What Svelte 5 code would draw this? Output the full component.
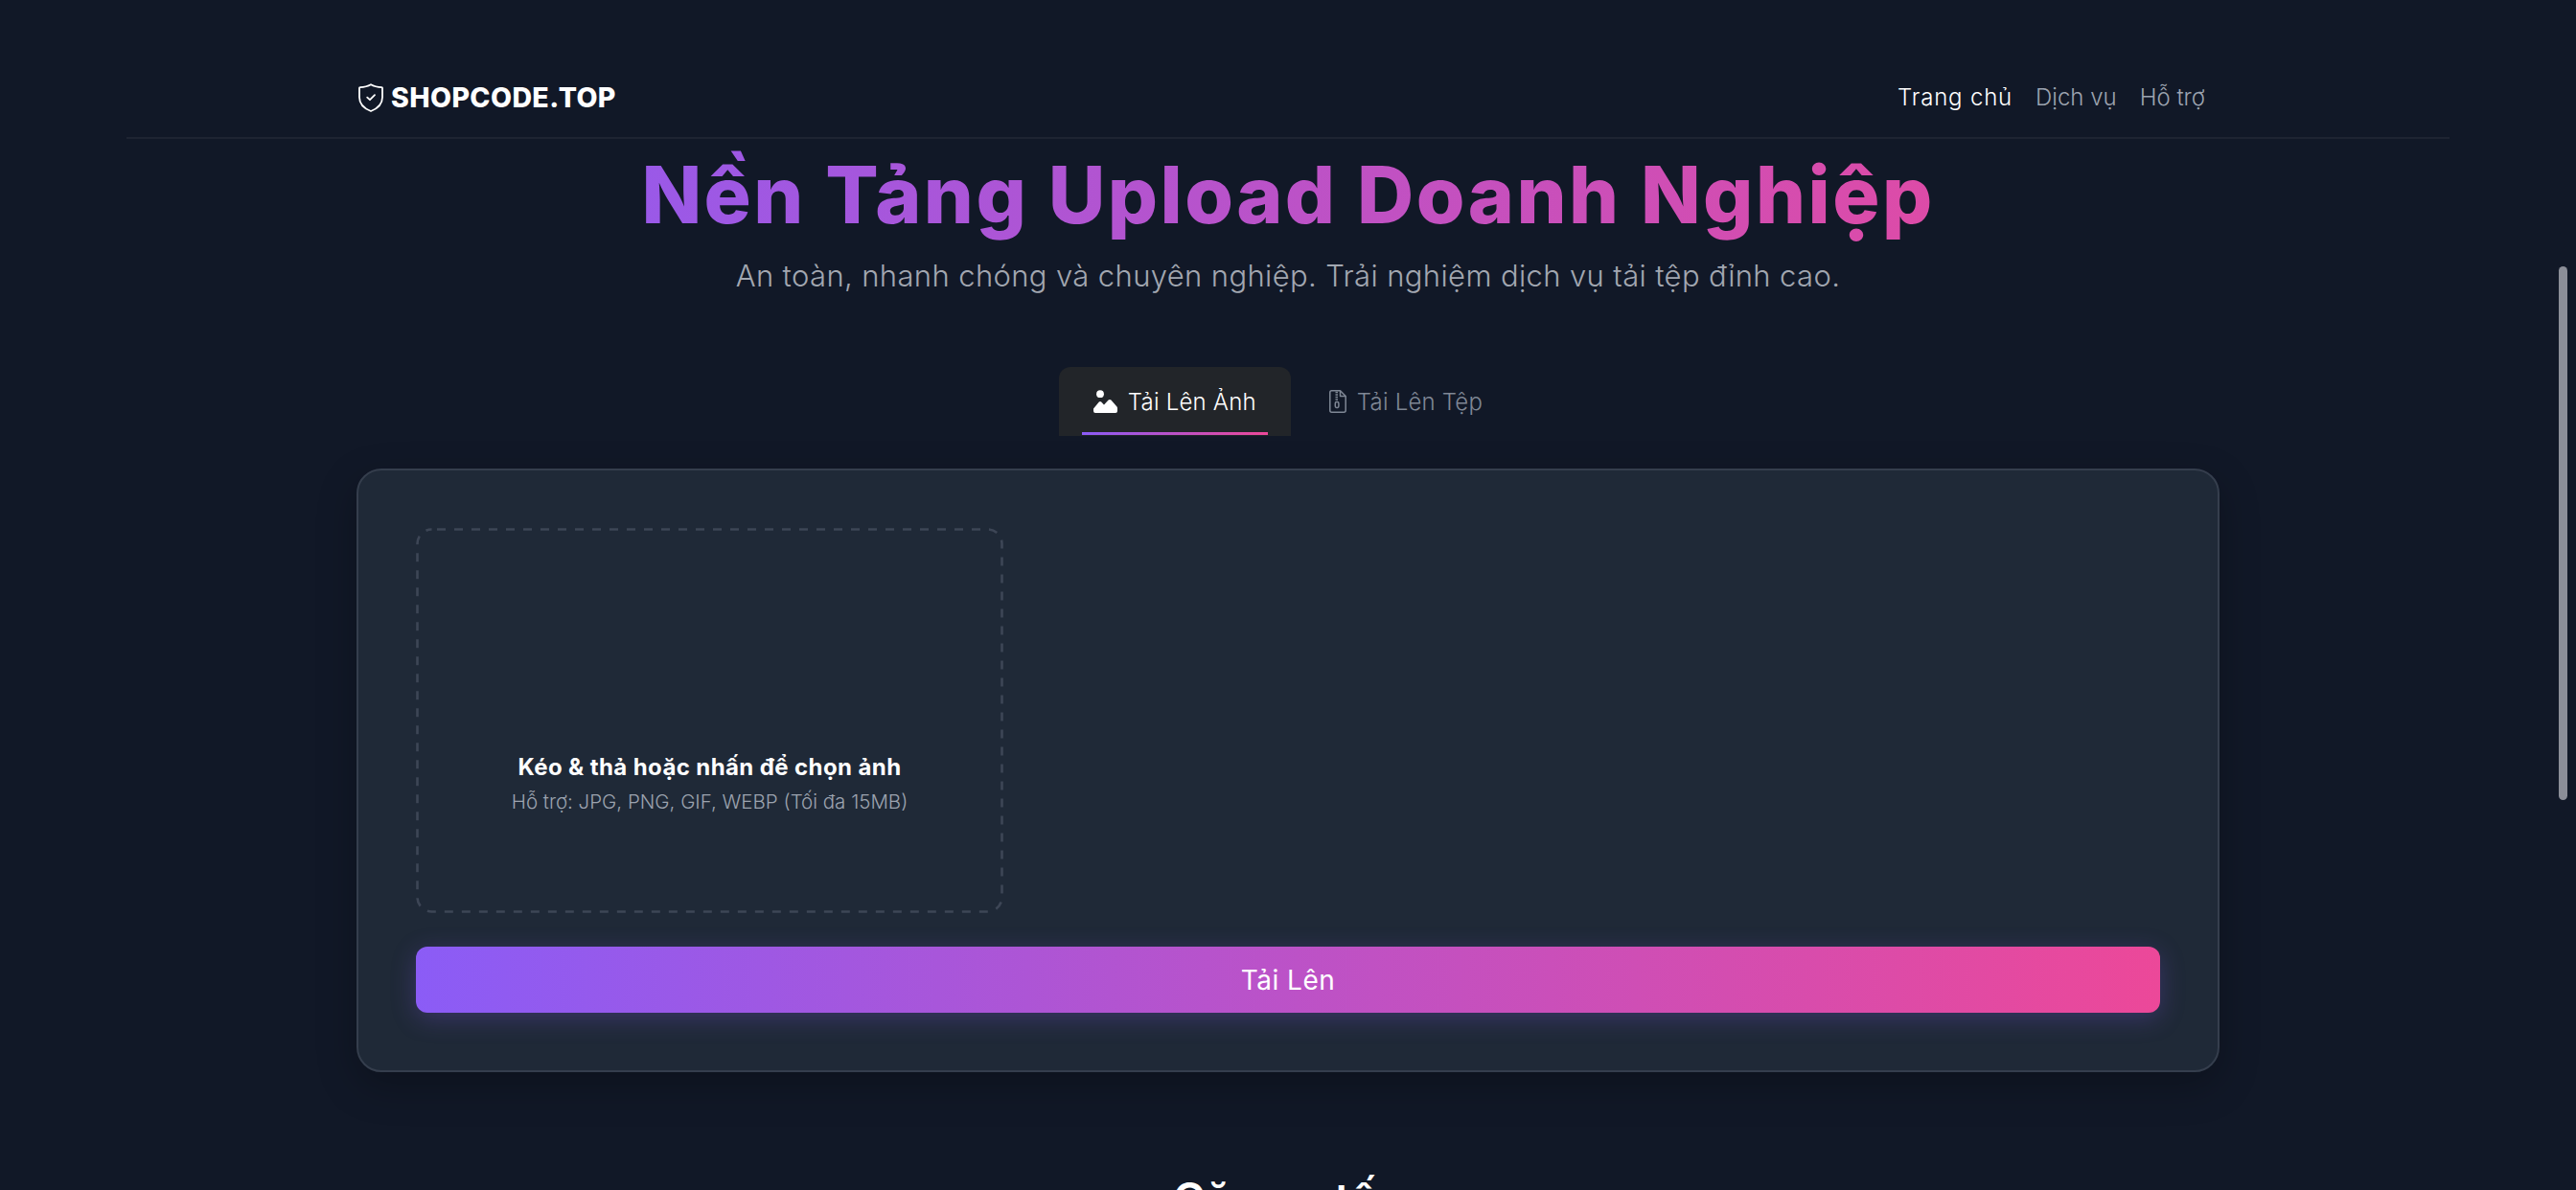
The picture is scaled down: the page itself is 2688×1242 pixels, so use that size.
<script lang="ts">
let tab = $state("image")
const links = ["Trang chủ", "Dịch vụ", "Hỗ trợ"]
</script>

<div class="page">
  <header class="topbar">
    <a class="logo" href="#top">
      <svg class="shield" viewBox="0 0 26 30" fill="none" stroke="currentColor" stroke-width="1.8" stroke-linecap="round" stroke-linejoin="round">
        <path d="M13 1.2C16 3 19.6 3.9 24.4 4.1 24.8 4.1 25 4.4 25 4.8V14.5C25 21 20.6 26 13 29 5.4 26 1 21 1 14.5V4.8C1 4.4 1.2 4.1 1.6 4.1 6.4 3.9 10 3 13 1.2Z" />
        <path d="M9.2 14.6 12 17.2 17 12.2" />
      </svg>
      <span>SHOPCODE.TOP</span>
    </a>
    <nav class="nav">
      {#each links as link, i}
        <a href="#top" class:current={i === 0}>{link}</a>
      {/each}
    </nav>
  </header>

  <main class="content">
    <h1>Nền Tảng Upload Doanh Nghiệp</h1>
    <p class="lede">An toàn, nhanh chóng và chuyên nghiệp. Trải nghiệm dịch vụ tải tệp đỉnh cao.</p>

    <div class="tabs" role="tablist">
      <button class:active={tab === "image"} onclick={() => (tab = "image")}>
        <svg class="ic-image" viewBox="0 0 25 24" fill="currentColor">
          <circle cx="7" cy="4.2" r="3.9" />
          <path d="M0 19.5 5.8 12.5Q7 11.5 8.2 12.5L11 15.5 15.6 10.6Q17 9.5 18.4 10.6L24.5 17.5Q25 18 25 19V22Q25 24 23 24H2Q0 24 0 22Z" />
        </svg>
        Tải Lên Ảnh
      </button>
      <button class:active={tab === "file"} onclick={() => (tab = "file")}>
        <svg class="ic-file" viewBox="0 0 18 24" fill="none" stroke="currentColor" stroke-width="1.5" stroke-linejoin="round">
          <path d="M2.5.8H11.5L17.2 6.5V21.2C17.2 22.3 16.3 23.2 15.2 23.2H2.5C1.5 23.2.8 22.3.8 21.2V2.8C.8 1.6 1.5.8 2.5.8Z" />
          <path d="M11.5 1V6.5H17" />
          <path d="M6.5 2.5H9M9 5H6.5M6.5 7.5H9M9 10H6.5" />
          <rect x="6.3" y="12.5" width="3.6" height="6" rx="1.4" />
        </svg>
        Tải Lên Tệp
      </button>
    </div>

    <section class="card">
      <div class="uploader">
        <div class="dropzone">
          <svg class="dashes" viewBox="0 0 613 402" fill="none">
            <rect x="1.5" y="1.5" width="610" height="399" rx="15" stroke="#3d4656" stroke-width="2.6" stroke-dasharray="9 9" stroke-dashoffset="12.5" />
          </svg>
          <strong>Kéo &amp; thả hoặc nhấn để chọn ảnh</strong>
          <small>Hỗ trợ: JPG, PNG, GIF, WEBP (Tối đa 15MB)</small>
        </div>
        <div class="preview"></div>
      </div>
      <button class="submit">Tải Lên</button>
    </section>

    <h2>Căn so tấc</h2>
  </main>

  <div class="scrollthumb"></div>
</div>

<style>
  :global(body) {
    margin: 0;
    background: #111827;
    font-family: Inter, "Noto Sans", sans-serif;
    color: #fff;
  }

  .page {
    height: 1242px;
    overflow: hidden;
    position: relative;
  }

  .topbar {
    box-sizing: border-box;
    width: 2424px;
    height: 145px;
    margin: 0 auto;
    padding: 60px 255px 0 242px;
    display: flex;
    justify-content: space-between;
    align-items: center;
    border-bottom: 2px solid #1e2432;
  }

  .logo {
    display: flex;
    align-items: center;
    gap: 8px;
    color: #fff;
    text-decoration: none;
    font-size: 28.5px;
    font-weight: 800;
    letter-spacing: 0.4px;
  }

  .shield {
    width: 26px;
    height: 30px;
  }

  .nav {
    display: flex;
    gap: 24px;
  }

  .nav a {
    color: #9ca3af;
    text-decoration: none;
    font-size: 24px;
    font-weight: 300;
  }

  .nav a.current {
    color: #fff;
    letter-spacing: 0.8px;
  }

  .content {
    width: 1944px;
    margin: 0 auto;
    display: flex;
    flex-direction: column;
    align-items: center;
  }

  h1 {
    width: 100%;
    margin: 10px 0 0;
    text-align: center;
    font-size: 82px;
    line-height: 98px;
    font-weight: 800;
    letter-spacing: 2.45px;
    background: linear-gradient(90deg, #8b5cf6, #ec4899);
    -webkit-background-clip: text;
    background-clip: text;
    color: transparent;
  }

  .lede {
    margin: 12px 0 0;
    font-size: 31px;
    line-height: 46px;
    font-weight: 300;
    letter-spacing: 0.37px;
    color: #a2a7b1;
  }

  .tabs {
    display: flex;
    gap: 4px;
    margin-top: 72px;
  }

  .tabs button {
    position: relative;
    height: 72px;
    padding: 0 36px;
    display: flex;
    align-items: center;
    gap: 11px;
    border: none;
    border-radius: 12px 12px 0 0;
    background: transparent;
    color: #7f8795;
    font: 300 24px Inter, sans-serif;
    letter-spacing: 0.2px;
    cursor: pointer;
  }

  .tabs button.active {
    background: #222529;
    color: #fff;
  }

  .tabs button.active::after {
    content: "";
    position: absolute;
    left: 24px;
    right: 24px;
    bottom: 1px;
    height: 3px;
    background: linear-gradient(90deg, #8b5cf6, #ec4899);
  }

  .ic-image {
    width: 25px;
    height: 24px;
  }

  .ic-file {
    width: 18px;
    height: 24px;
  }

  .card {
    box-sizing: border-box;
    width: 100%;
    margin-top: 34px;
    padding: 60px;
    display: flex;
    flex-direction: column;
    gap: 35px;
    background: #1f2937;
    border: 2px solid #353e4d;
    border-radius: 26px;
    box-shadow: 0 14px 40px rgba(0, 0, 0, 0.25);
  }

  .uploader {
    display: grid;
    grid-template-columns: 613px 1fr;
  }

  .dropzone {
    position: relative;
    box-sizing: border-box;
    height: 402px;
    padding-bottom: 102px;
    display: flex;
    flex-direction: column;
    justify-content: flex-end;
    align-items: center;
    gap: 7px;
  }

  .dashes {
    position: absolute;
    inset: 0;
    width: 100%;
    height: 100%;
  }

  .dropzone strong {
    font-size: 24px;
    line-height: 30px;
    font-weight: 700;
    letter-spacing: 0.4px;
  }

  .dropzone small {
    font-size: 20.5px;
    line-height: 28px;
    font-weight: 300;
    color: #9ca3af;
  }

  .submit {
    height: 69px;
    border: none;
    border-radius: 12px;
    background: linear-gradient(90deg, #8b5cf6, #ec4899);
    color: #fff;
    font: 400 28px Inter, sans-serif;
    letter-spacing: 0.5px;
    box-shadow: 0 6px 26px rgba(139, 92, 246, 0.25);
    cursor: pointer;
  }

  h2 {
    margin: 104px 0 0;
    font-size: 46px;
    line-height: 56px;
    font-weight: 600;
    letter-spacing: 0.6px;
  }

  .scrollthumb {
    position: absolute;
    left: 2670px;
    top: 278px;
    width: 9px;
    height: 557px;
    border-radius: 5px;
    background: #8b8e98;
  }
</style>
